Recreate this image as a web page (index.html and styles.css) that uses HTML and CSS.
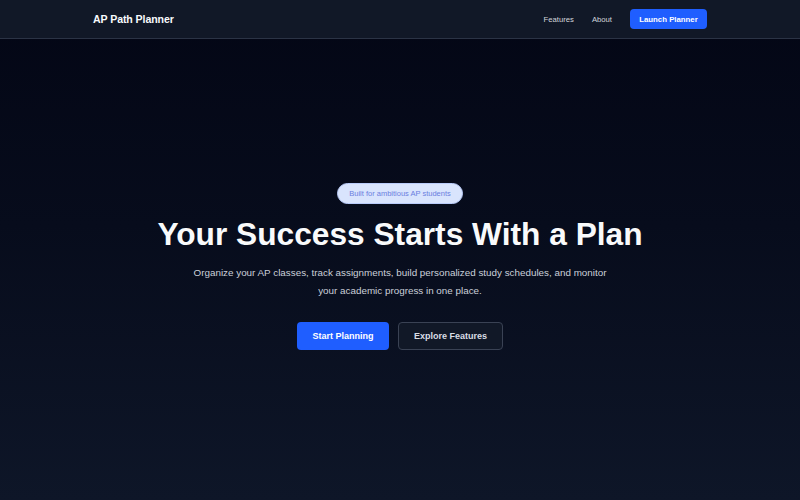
FILE: index.html
```html
<!DOCTYPE html>
<html lang="en">
<head>
<meta charset="utf-8">
<title>AP Path Planner</title>
<link rel="stylesheet" href="styles.css">
</head>
<body>
<header class="site-header">
  <div class="container header-inner">
    <div class="logo">AP Path Planner</div>
    <nav class="nav">
      <a class="nav-link" href="#">Features</a>
      <a class="nav-link" href="#">About</a>
      <a class="btn btn-primary btn-small" href="#">Launch Planner</a>
    </nav>
  </div>
</header>
<main class="hero">
  <span class="badge">Built for ambitious AP students</span>
  <h1 class="hero-title">Your Success Starts With a Plan</h1>
  <p class="hero-text">Organize your AP classes, track assignments, build personalized study schedules, and monitor your academic progress in one place.</p>
  <div class="hero-actions">
    <a class="btn btn-primary btn-large" href="#">Start Planning</a>
    <a class="btn btn-outline btn-large" href="#">Explore Features</a>
  </div>
</main>
</body>
</html>
```
FILE: styles.css
```css
* { box-sizing: border-box; }
html, body { margin: 0; height: 100%; }
body {
  font-family: "Liberation Sans", Arial, sans-serif;
  background: linear-gradient(180deg, #030615 0%, #070c1c 45%, #0e1628 100%);
  color: #fff;
  display: flex;
  flex-direction: column;
}
a { text-decoration: none; color: inherit; }
.site-header {
  background: #111827;
  border-bottom: 1px solid #2b3345;
  height: 39px;
  flex: none;
}
.container { width: 614px; margin: 0 auto; }
.header-inner {
  height: 100%;
  display: flex;
  align-items: center;
  justify-content: space-between;
}
.logo { font-weight: 700; font-size: 10.6px; letter-spacing: -0.1px; color: #f8fafc; }
.nav { display: flex; align-items: center; }
.nav-link { font-size: 7.7px; color: #d1d5db; margin-right: 18px; }
.btn {
  display: inline-flex;
  align-items: center;
  justify-content: center;
  font-weight: 700;
  border-radius: 4px;
}
.btn-primary { background: #1f5eff; color: #fff; }
.btn-small { height: 20px; width: 77px; font-size: 7.8px; }
.hero {
  flex: 1;
  display: flex;
  flex-direction: column;
  align-items: center;
  padding-top: 144px;
}
.badge {
  display: inline-flex;
  align-items: center;
  height: 21px;
  padding: 0 11px;
  border-radius: 11px;
  background: #d9e4fd;
  border: 1px solid #b9cbf9;
  color: #6b7ee0;
  font-size: 7.5px;
}
.hero-title {
  margin: 11px 0 0;
  font-size: 31.7px;
  line-height: 38px;
  font-weight: 700;
  color: #f9fafb;
}
.hero-text {
  margin: 11px 0 0;
  width: 425px;
  text-align: center;
  font-size: 9.85px;
  line-height: 18px;
  color: #cbd0da;
}
.hero-actions { display: flex; gap: 9px; margin-top: 22px; }
.btn-large { height: 28px; font-size: 9px; }
.btn-primary.btn-large { width: 92px; }
.btn-outline {
  width: 105px;
  background: #111827;
  border: 1px solid #3a4254;
  color: #d9dde5;
}
```
